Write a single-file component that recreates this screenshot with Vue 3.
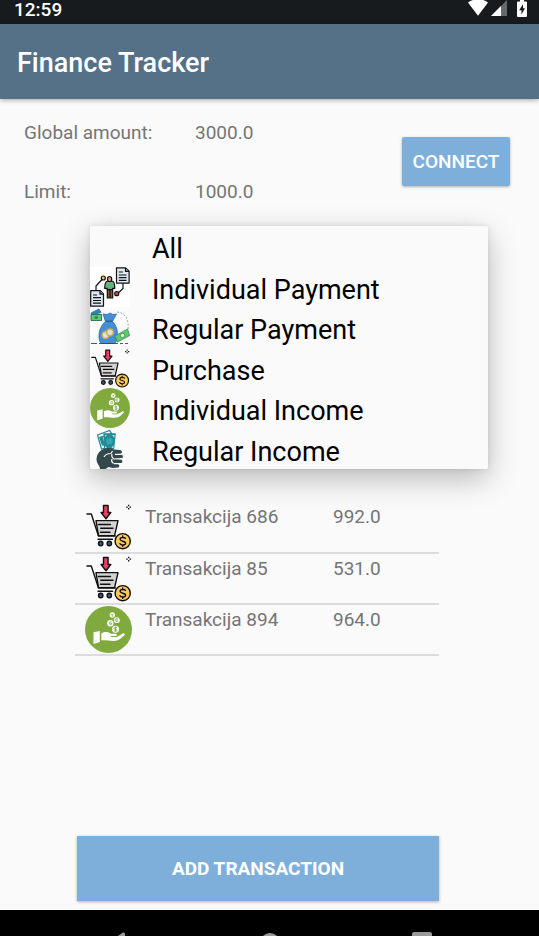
<script setup>
import { ref } from 'vue'

const amounts = [
  { id: 'global', label: 'Global amount:', value: '3000.0' },
  { id: 'limit', label: 'Limit:', value: '1000.0' },
]

const filters = [
  { label: 'All', icon: '' },
  { label: 'Individual Payment', icon: 'individual-payment' },
  { label: 'Regular Payment', icon: 'regular-payment' },
  { label: 'Purchase', icon: 'purchase' },
  { label: 'Individual Income', icon: 'individual-income' },
  { label: 'Regular Income', icon: 'regular-income' },
]
const selected = ref('All')

const transactions = [
  { name: 'Transakcija 686', amount: '992.0', icon: 'purchase' },
  { name: 'Transakcija 85', amount: '531.0', icon: 'purchase' },
  { name: 'Transakcija 894', amount: '964.0', icon: 'individual-income' },
]
</script>

<template>
  <div class="screen">
    <svg class="defs" aria-hidden="true">
      <symbol id="individual-payment" viewBox="0 0 40 40">
        <rect width="40" height="40" fill="#fff" />
        <g stroke="#111" stroke-width="1.2" stroke-linejoin="round">
          <path d="M12.5 12 6 19v5M33 16v5.500l-6 5.500" fill="none" />
          <circle cx="13.300" cy="11" r="2" fill="#f4cb45" />
          <circle cx="26.700" cy="26.700" r="2" fill="#df5647" />
          <path d="M17.300 21h5.400v10h-5.400z" fill="#8c522e" />
          <path d="M20 23v8" />
          <path d="M17.500 14h4.600c2 .4 2.700 3.400 2.700 7.400h-2.300v1.200h-5.300v-1.200h-2.500c0-4 .8-7 2.800-7.400z" fill="#62b27b" />
          <path d="M17.500 12.500c-.4-4 4.600-4 4.200 0l-.7 2h-2.800z" fill="#e78e70" />
          <path d="M.7 23.700h9.600l3.200 3.200v12.300H.7zM26.500.8h9.200l3.400 3.400v11.900H26.500z" fill="#dce8f1" />
          <path d="M10 24v3.200h3.300M35.500 1v3.400H39" fill="#8ca4b8" />
          <path d="M3 28h4M3 30.700h8M3 33.500h8M3 36.200h8M28.800 5h4M28.800 8h7.700M28.800 10.600h7.700M28.800 13.300h7.700" fill="none" />
        </g>
      </symbol>

      <symbol id="regular-payment" viewBox="0 0 40 40">
        <rect width="40" height="40" fill="#fafafa" />
        <path d="M27 5c9 1 12 8 11 18" fill="none" stroke="#7d8fa0" stroke-width=".8" stroke-dasharray="2 1.500" />
        <path d="m1 6 8-4 2 3.500-9 3z" fill="#3084be" stroke="#246184" stroke-width=".7" />
        <path d="M1 7.500h10.500v6H1z" fill="#59cb6b" stroke="#246b58" stroke-width=".9" />
        <circle cx="6.300" cy="10.500" r="1.600" fill="#337d65" />
        <path d="m13 7 4 .5 3-1.500 3 1.500 3.500-.5-4 7.500c3 3 5 7 5 13 0 6-2 9-4 9H13c-3 0-4-3-4-8 0-6 3-11 6.500-14z" fill="#438ed5" stroke="#286eae" stroke-width=".8" />
        <path d="M15.500 14.200h7" stroke="#21588f" stroke-width="1.200" />
        <g fill="#d8e2e8" stroke="#d9aa40" stroke-width="1.500">
          <circle cx="15.500" cy="28" r="3.400" />
          <circle cx="20" cy="25.300" r="3.400" />
        </g>
        <path d="m25 29 12.500-7 2.200 6.500L27.500 35z" fill="#5ccd68" stroke="#328e51" stroke-width=".8" />
        <circle cx="32.500" cy="28.400" r="2.200" fill="#dcf2d6" stroke="#328e51" stroke-width=".8" />
        <path d="M1 36.500h6m2 0h19m2 0h3m2 0h3" stroke="#294b67" stroke-width=".9" />
      </symbol>

      <symbol id="purchase" viewBox="0 0 47 47">
        <g stroke="#111" stroke-width="1.400" stroke-linejoin="round" stroke-linecap="round">
          <path d="M18.500 2.500h4.600v7h2.700L21 15.700l-4.900-6.200h2.400z" fill="#ea3f63" />
          <path d="M11 17.600h22l-3.400 15H13.500z" fill="#d2d2d2" />
          <path d="M2 11h4.300l7.200 22h16.800M13 36.200h14.500" fill="none" />
          <path d="M13.500 21.500h12M15.700 25.200H28M15.500 29.200h9.500" fill="none" />
          <circle cx="15.700" cy="40.500" r="2.200" fill="#315b86" />
          <circle cx="24.300" cy="40.500" r="2.200" fill="#315b86" />
          <circle cx="37.700" cy="38.200" r="7.600" fill="#ffc85a" />
          <path d="M40.500 35.500c-.8-1.400-5.400-1.500-5.400.8 0 2.400 5.500 1.400 5.500 3.900 0 2.300-4.700 2.300-5.700.5M37.700 33v1.200m0 8v1.200" fill="none" />
        </g>
        <path d="M43.700 1.800v1.500m0 1.800v1.500m-2.400-2.400h1.500m1.800 0h1.500" fill="none" stroke="#111" stroke-width="1.300" />
      </symbol>

      <symbol id="individual-income" viewBox="0 0 47 47">
        <circle cx="23.500" cy="23.500" r="23.500" fill="#80aa3d" />
        <g fill="#fff">
          <circle cx="27.300" cy="9" r="2.700" />
          <circle cx="31.800" cy="14.200" r="2.900" />
          <circle cx="25.300" cy="17.200" r="3.200" />
          <circle cx="30.500" cy="23.300" r="3.500" />
          <path d="m8.500 26.300 6.300-1.200v10.800l-6.300 2.200z" />
          <path d="M16.300 27.400c4-2 6.700-1.600 9.500.3h5c1.700.3 1.600 2.200 0 2.400h-5v.8h6.200l5.800-3.400c1.500-.8 2.700.8 1.500 1.800-3.200 3-5.300 5-8.300 5.500-4.500.6-9-.8-14.700-.5z" />
        </g>
        <g fill="none" stroke="#80aa3d" stroke-width=".9">
          <path d="m26 7.700 1.300 1.400 1.300-1.400m-1.300 1.400v1.800M33 13c-2-1.200-3 .2-2.700 1.400.4 1.500 2 1.400 2.700.7m-2.200-1h1.800M26.600 16c-2.700-1.200-3 2.800-.8 2.500 1 0 1-.8 1-1.200h-1.300M32 22c-1-1-3-.8-3 .3 0 1.500 3 .6 3 2 0 1.200-2 1.200-3 .3m1.500-3.900v5" />
          <path d="M10.500 34.800h.8" />
        </g>
      </symbol>

      <symbol id="regular-income" viewBox="0 0 40 40">
        <path d="m7.500 6 12-4.500 2 3L12 8l3 11-3.500 1z" fill="#fff" stroke="#218b98" stroke-width="1.300" />
        <path d="m9 8 3-1 2 9-2 1z" fill="#218b98" />
        <path d="M13.300 4.300h12.500L24.300 20H14z" fill="#218b98" />
        <path d="m15 6 2 0-1.500 2zM22 6h2.400v3zM15 17l2 2h-2zM23.500 16v3h-2z" fill="#b7e1e1" />
        <circle cx="19.500" cy="12" r="3.200" fill="#36a5af" />
        <path d="M7 27c2-5 5-6.500 8-7.500 4-1 6-.5 9 1l6 .5c2.500.5 2.500 3.500.3 4l-4.300.3 5 .2c2.600.5 2.500 4 0 4.300l-4.600.2 4.300.5c2.300.5 2.200 3.800-.3 4l-3.400.2c3 .8 3 3.300 1 3.800l-5.500.5-4-1-3 2H10c0-4-5-6-3-13z" fill="#34474a" />
        <path d="M14 28c1.500-3 4-3.500 7-3.500l1.500-2.500M22 25c-1 3 .5 4 2 5l8-.3M24 34.700h8M25 25.300h7M22 30c-1 2 0 3.500 1.500 4.500" fill="none" stroke="#fafafa" stroke-width="1.200" />
      </symbol>
    </svg>

    <header>
      <div class="status-bar">
        <span>12:59</span>
        <span class="status-icons">
          <svg width="20" height="16" viewBox="0 0 20 16"><path d="M0 2.500C5.500-1.800 14.500-1.800 20 2.500L10 15.700z" fill="#fff" /></svg>
          <svg width="16" height="16" viewBox="0 0 16 16"><path d="M16 0v16H0z" fill="#65696b" /><path d="M10 6v10H0z" fill="#fff" /></svg>
          <svg class="battery" width="10" height="17" viewBox="0 0 10 17"><path d="M3 0h4v1.500h2q1 0 1 1V16q0 1-1 1H1q-1 0-1-1V2.500q0-1 1-1h2z" fill="#fff" /><path d="M6 4 2.200 10.300h2.300V14.500L8 8.300H6z" fill="#171b1e" /></svg>
        </span>
      </div>
      <div class="app-bar"><h1>Finance Tracker</h1></div>
    </header>

    <main>
      <section class="summary">
        <dl>
          <div v-for="item in amounts" :key="item.id" class="amount">
            <dt>{{ item.label }}</dt>
            <dd>{{ item.value }}</dd>
          </div>
        </dl>
        <button type="button" class="connect">CONNECT</button>
      </section>

      <table>
        <tbody>
          <tr v-for="item in transactions" :key="item.name">
            <td class="icon-cell"><svg class="row-icon" aria-hidden="true"><use :href="'#' + item.icon" /></svg></td>
            <td class="name-cell">{{ item.name }}</td>
            <td>{{ item.amount }}</td>
          </tr>
        </tbody>
      </table>

      <button type="button" class="add">ADD TRANSACTION</button>

      <div class="filter-menu" role="listbox">
        <button
          v-for="filter in filters"
          :key="filter.label"
          type="button"
          role="option"
          :aria-selected="selected === filter.label"
          @click="selected = filter.label"
        >
          <svg class="filter-icon" aria-hidden="true"><use v-if="filter.icon" :href="'#' + filter.icon" /></svg>
          <span>{{ filter.label }}</span>
        </button>
      </div>
    </main>

    <nav>
      <button type="button" aria-label="Back"><svg width="20" height="22" viewBox="0 0 20 22"><path d="M15 .5Q17 0 17 2v18q0 2-2 1L1 12q-1-1 0-2z" /></svg></button>
      <button type="button" aria-label="Home"><svg width="20" height="22" viewBox="0 0 20 22"><circle cx="10" cy="11" r="10" /></svg></button>
      <button type="button" aria-label="Recent apps"><svg width="20" height="22" viewBox="0 0 20 22"><rect width="20" height="20" rx="2" /></svg></button>
    </nav>
  </div>
</template>

<style>
body {
  margin: 0;
  background: #fafafa;
}
</style>

<style scoped>
.screen {
  display: flex;
  flex-direction: column;
  min-height: 100vh;
  background: #fafafa;
  color: #757575;
  font-family: Roboto, sans-serif;
  font-size: 19px;
  line-height: 24px;
}
.defs {
  position: absolute;
  width: 0;
  height: 0;
}
button {
  margin: 0;
  border: 0;
  padding: 0;
  font: inherit;
  cursor: pointer;
}
.status-bar {
  display: flex;
  justify-content: space-between;
  height: 24px;
  padding: 0 12px 0 14px;
  background: #171b1e;
  color: #fff;
  font-weight: 500;
  line-height: 20px;
}
.status-icons {
  display: flex;
  gap: 3px;
}
.battery {
  margin-left: 7px;
}
.app-bar {
  display: flex;
  align-items: center;
  height: 75px;
  box-sizing: border-box;
  padding: 2px 17px 0;
  background: #557188;
  box-shadow: 0 1px 5px rgba(0, 0, 0, 0.35);
}
h1 {
  margin: 0;
  color: #fff;
  font-size: 27px;
  font-weight: 500;
  line-height: 32px;
}
main {
  position: relative;
  display: flex;
  flex: 1;
  flex-direction: column;
}
.summary {
  display: flex;
  justify-content: space-between;
  align-items: flex-start;
  padding: 22px 29px 0 24px;
}
dl {
  display: grid;
  gap: 35px;
  margin: 0;
}
.amount {
  display: grid;
  grid-template-columns: 171px auto;
}
dd {
  margin: 0;
}
.connect,
.add {
  background: #7eafdb;
  box-shadow: 0 1px 3px rgba(0, 0, 0, 0.3);
  color: #fff;
}
.connect {
  margin-top: 16px;
  width: 108px;
  height: 49px;
  border-radius: 2px;
  font-weight: 500;
}
table {
  margin: 298px 100px 0 75px;
  border-collapse: collapse;
  table-layout: fixed;
}
tr {
  border-bottom: 2px solid #dcdcdc;
}
td {
  height: 51px;
  padding: 3px 0 0;
  box-sizing: border-box;
  vertical-align: top;
}
.icon-cell {
  width: 70px;
  padding: 1px 0 0 10px;
}
.name-cell {
  width: 188px;
}
.row-icon {
  display: block;
  width: 47px;
  height: 47px;
}
.add {
  margin: auto 100px 9px 77px;
  height: 65px;
  font-weight: 700;
}
.filter-menu {
  position: absolute;
  top: 127px;
  right: 51px;
  left: 90px;
  display: grid;
  grid-template-rows: repeat(6, 1fr);
  height: 243px;
  border-radius: 2px;
  background: #fafafa;
  box-shadow: 0 10px 30px rgba(0, 0, 0, 0.26), 0 0 6px rgba(0, 0, 0, 0.1);
}
.filter-menu button {
  display: flex;
  align-items: center;
  gap: 22px;
  background: transparent;
  color: #000;
  font-size: 27px;
  line-height: 32px;
  text-align: left;
}
.filter-icon {
  flex: none;
  width: 40px;
  height: 40px;
}
.filter-menu span {
  padding-top: 6px;
}
nav {
  display: flex;
  justify-content: center;
  height: 26px;
  overflow: hidden;
  background: #000;
}
nav button {
  display: flex;
  justify-content: center;
  width: 152px;
  padding-top: 22px;
  background: transparent;
}
nav svg {
  flex: none;
  fill: #999;
}
</style>
